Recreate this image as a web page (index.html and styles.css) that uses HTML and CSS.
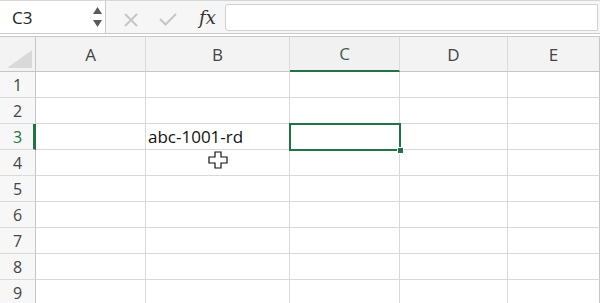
FILE: index.html
```html
<!DOCTYPE html>
<html lang="en">
<head>
    <meta charset="UTF-8">
    <title>Sheet</title>
    <link rel="stylesheet" href="styles.css">
</head>
<body>

<div class="toolbar">
    <div class="namebox">
        <span>C3</span>
        <div class="spin">
            <svg width="9" height="7" viewBox="0 0 9 7"><path d="M4.5 0 L9 7 L0 7 Z" fill="#5a5a5a"/></svg>
            <svg width="9" height="7" viewBox="0 0 9 7"><path d="M0 0 L9 0 L4.5 7 Z" fill="#5a5a5a"/></svg>
        </div>
    </div>
    <div class="tools">
        <svg class="ico-x" width="16" height="14" viewBox="0 0 16 14"><path d="M2 1 L14 13 M14 1 L2 13" stroke="#c6c6c6" stroke-width="2" fill="none"/></svg>
        <svg class="ico-ok" width="18" height="13" viewBox="0 0 18 13"><path d="M1 6 L6.5 11.5 L17 1" stroke="#c6c6c6" stroke-width="2" fill="none"/></svg>
        <span class="fx">fx</span>
    </div>
    <div class="formula"></div>
</div>

<div class="sheet">
    <div class="corner">
        <svg width="25" height="18" viewBox="0 0 25 18"><path d="M25 0 L25 18 L0 18 Z" fill="#d9d9d9"/></svg>
    </div>
    <div class="colh">A</div>
    <div class="colh">B</div>
    <div class="colh sel">C</div>
    <div class="colh">D</div>
    <div class="colh last">E</div>

    <div class="rowh">1</div><div class="cell"></div><div class="cell"></div><div class="cell"></div><div class="cell"></div><div class="cell last"></div>
    <div class="rowh">2</div><div class="cell"></div><div class="cell"></div><div class="cell"></div><div class="cell"></div><div class="cell last"></div>
    <div class="rowh sel">3</div><div class="cell"></div><div class="cell">abc-1001-rd</div><div class="cell active"></div><div class="cell"></div><div class="cell last"></div>
    <div class="rowh">4</div><div class="cell"></div><div class="cell"></div><div class="cell"></div><div class="cell"></div><div class="cell last"></div>
    <div class="rowh">5</div><div class="cell"></div><div class="cell"></div><div class="cell"></div><div class="cell"></div><div class="cell last"></div>
    <div class="rowh">6</div><div class="cell"></div><div class="cell"></div><div class="cell"></div><div class="cell"></div><div class="cell last"></div>
    <div class="rowh">7</div><div class="cell"></div><div class="cell"></div><div class="cell"></div><div class="cell"></div><div class="cell last"></div>
    <div class="rowh">8</div><div class="cell"></div><div class="cell"></div><div class="cell"></div><div class="cell"></div><div class="cell last"></div>
    <div class="rowh">9</div><div class="cell"></div><div class="cell"></div><div class="cell"></div><div class="cell"></div><div class="cell last"></div>
</div>

<svg class="cursor" width="20" height="18" viewBox="0 0 20 18">
    <path d="M7 1 H13 V6 H19 V12 H13 V17 H7 V12 H1 V6 H7 Z" fill="#fff" stroke="#111" stroke-width="1.2"/>
</svg>

</body>
</html>
```

FILE: styles.css
```css
body { margin: 0; width: 600px; height: 303px; overflow: hidden; background: #fff; font-family: "Open Sans", "Noto Sans", sans-serif; color: #222; position: relative; }

.toolbar { display: flex; align-items: center; height: 32px; background: #f6f6f6; border-top: 1px solid #d6d6d6; border-bottom: 1px solid #c9c9c9; }
.namebox { display: flex; align-items: center; justify-content: space-between; width: 93px; height: 32px; padding-left: 12px; background: #fff; border-right: 1px solid #c9c9c9; font-size: 17px; }
.spin { display: flex; flex-direction: column; gap: 6px; padding-right: 3px; }
.spin svg { display: block; }
.tools { display: flex; align-items: center; width: 102px; padding-left: 17px; }
.ico-x { margin-top: 6px; }
.ico-ok { margin: 5px 0 0 20px; }
.fx { margin-left: 22px; font-family: "DejaVu Serif", "Liberation Serif", serif; font-style: italic; font-size: 18px; color: #333; }
.formula { flex: 1; height: 25px; margin-right: 2px; background: #fff; border: 1px solid #d0d0d0; border-radius: 3px 0 0 3px; }

.sheet { display: grid; grid-template-columns: 36px 110px 144px 110px 108px 92px; grid-template-rows: 35px repeat(9, 26px); margin-top: 2px; border-top: 1px solid #c9c9c9; }

.corner { display: flex; align-items: flex-end; justify-content: flex-end; padding: 0 3px 3px 0; background: #f3f3f3; border-right: 1px solid #c6c6c6; border-bottom: 1px solid #c6c6c6; }
.corner svg { display: block; }
.colh { display: flex; align-items: center; justify-content: center; background: #f3f3f3; border-right: 1px solid #dadada; border-bottom: 1px solid #c6c6c6; font-size: 17px; color: #444; }
.colh.sel { border-bottom: 2px solid #217346; background: #f1f1f1; color: #3b5f4b; }
.colh.last { border-right: 1px solid #c6c6c6; }

.rowh { display: flex; align-items: center; justify-content: center; background: #f7f7f7; border-right: 1px solid #c6c6c6; border-bottom: 1px solid #dadada; font-size: 16px; color: #444; }
.rowh.sel { color: #217346; border-right: 3px solid #217346; padding-left: 2px; }

.cell { display: flex; align-items: center; padding-left: 2px; border-right: 1px solid #d9d9d9; border-bottom: 1px solid #d9d9d9; font-size: 17px; color: #111; white-space: nowrap; }
.cell.last { border-right: 1px solid #c6c6c6; }
.cell.active { position: relative; z-index: 1; outline: 2px solid #217346; outline-offset: -1px; }
.cell.active::after { content: ""; position: absolute; right: -5px; bottom: -5px; width: 5px; height: 5px; background: #217346; border: 1px solid #fff; }

.cursor { position: absolute; left: 208px; top: 151px; }
```
